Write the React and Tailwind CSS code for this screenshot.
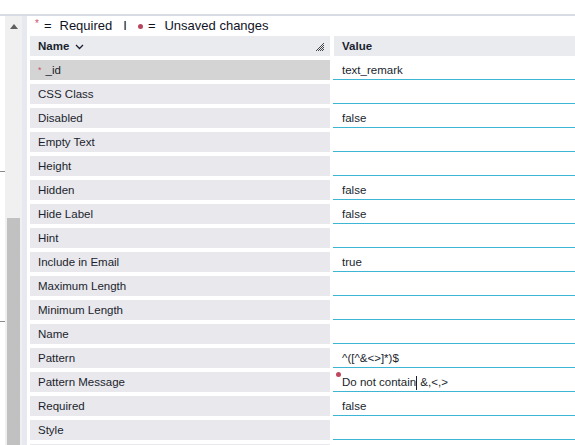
import React from "react";

const rows = [
  { name: "_id", value: "text_remark", required: true, selected: true },
  { name: "CSS Class", value: "" },
  { name: "Disabled", value: "false" },
  { name: "Empty Text", value: "" },
  { name: "Height", value: "" },
  { name: "Hidden", value: "false" },
  { name: "Hide Label", value: "false" },
  { name: "Hint", value: "" },
  { name: "Include in Email", value: "true" },
  { name: "Maximum Length", value: "" },
  { name: "Minimum Length", value: "" },
  { name: "Name", value: "" },
  { name: "Pattern", value: "^([^&<>]*)$" },
  { name: "Pattern Message", value: "Do not contain", rest: "\u00a0&,<,>", unsaved: true },
  { name: "Required", value: "false" },
  { name: "Style", value: "" },
  { name: "", value: "" },
];

export default function App() {
  return (
    <div className="w-[575px] h-[445px] overflow-hidden bg-white text-[#1b1f2e] font-['Liberation_Sans',Arial,sans-serif]">
      <div className="h-[14px] bg-white" />
      <div className="h-[2px] bg-[#d7dbe3]" />
      <div className="flex">
        {/* edge of neighbour panel */}
        <div className="w-[5px] flex flex-col">
          <div className="h-[155px]" />
          <div className="h-px bg-[#8a8a8a]" />
          <div className="h-[149px]" />
          <div className="h-px bg-[#8a8a8a]" />
        </div>

        {/* scrollbar */}
        <div className="w-[17px] h-[429px] bg-[#f0f0f0] flex flex-col items-center">
          <div className="h-[18px] flex items-center justify-center pt-[2px]">
            <svg width="8" height="5" viewBox="0 0 8 5">
              <polygon points="4,0 8,5 0,5" fill="#606060" />
            </svg>
          </div>
          <div className="h-[184px]" />
          <div className="w-[13px] flex-1 bg-[#c1c1c1]" />
        </div>
        <div className="w-[5px] h-[429px] bg-[#e6eaf0]" />

        {/* grid */}
        <div className="flex-1 pl-[3px]">
          <div className="h-[20px] flex items-center pl-[5px] text-[13px] font-medium text-[#10131f] gap-[5px]">
            <span className="text-[#d0506a] text-[10px] -mt-[5px]">*</span>
            <span>=</span>
            <span className="ml-[3px]">Required</span>
            <span className="ml-[6px]">I</span>
            <span className="ml-[6px] w-[5px] h-[5px] rounded-full bg-[#b8475c]" />
            <span>=</span>
            <span className="ml-[4px]">Unsaved changes</span>
          </div>

          <div className="flex gap-[4px] h-[20px]">
            <div className="w-[300px] bg-[#e9ebef] flex items-center pl-[8px] pr-[6px] pt-[1px] text-[11.5px] font-bold">
              <span>Name</span>
              <svg className="ml-[6px]" width="9" height="6" viewBox="0 0 9 6">
                <polyline points="1,1 4.5,4.5 8,1" fill="none" stroke="#1b1f2e" strokeWidth="1.3" />
              </svg>
              <svg className="ml-auto" width="8" height="8" viewBox="0 0 8 8">
                <line x1="0" y1="8" x2="8" y2="0" stroke="#444" strokeWidth="1" />
                <line x1="2" y1="8" x2="8" y2="2" stroke="#444" strokeWidth="1" />
                <line x1="4" y1="8" x2="8" y2="4" stroke="#444" strokeWidth="1" />
                <line x1="6" y1="8" x2="8" y2="6" stroke="#444" strokeWidth="1" />
              </svg>
            </div>
            <div className="flex-1 bg-[#e9ebef] flex items-center pl-[8px] pt-[1px] text-[11.5px] font-bold">
              Value
            </div>
          </div>

          <div className="flex flex-col gap-[4px] mt-[4px]">
            {rows.map((r, i) => (
              <div key={i} className="flex gap-[3px] h-[20px]">
                <div
                  className={`w-[300px] flex items-center pl-[8px] pt-[2px] text-[11.5px] leading-none ${
                    r.selected ? "bg-[#d4d4d4]" : "bg-[#e9e8ec]"
                  }`}
                >
                  {r.required && (
                    <span className="text-[#d0506a] text-[9px] mr-[4px] -mt-[2px]">*</span>
                  )}
                  {r.name}
                </div>
                <div className="flex-1 relative flex items-center pl-[9px] pt-[2px] text-[11.5px] leading-none shadow-[inset_0_-1px_0_#3cb6d4]">
                  {r.unsaved && (
                    <span className="absolute left-[3px] top-[0px] w-[5px] h-[5px] rounded-full bg-[#c0485e]" />
                  )}
                  <span>{r.value}</span>
                  {r.rest !== undefined && (
                    <>
                      <span className="inline-block w-px h-[14px] bg-[#1b1f2e]" />
                      <span>{r.rest}</span>
                    </>
                  )}
                </div>
              </div>
            ))}
          </div>
        </div>
      </div>
    </div>
  );
}
